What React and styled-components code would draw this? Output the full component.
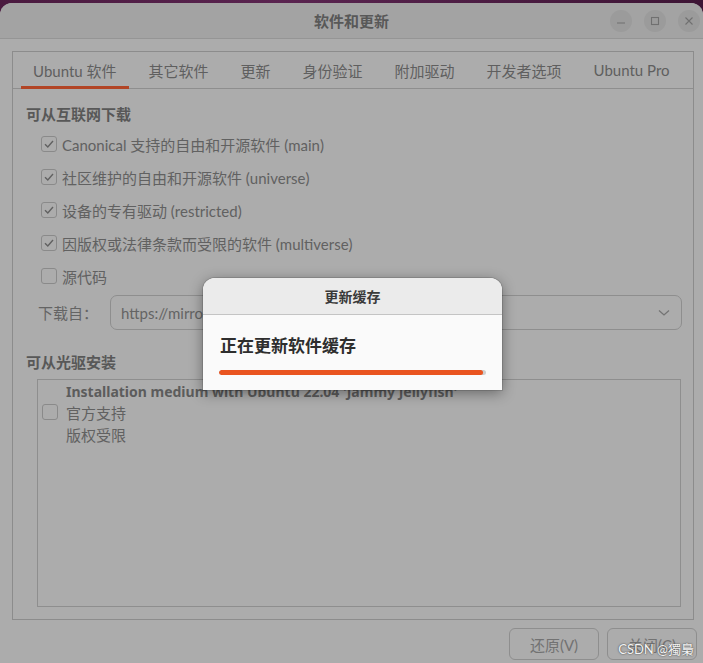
import styled, { createGlobalStyle } from "styled-components";

const GlobalStyle = createGlobalStyle`
  html, body {
    margin: 0;
    padding: 0;
    background: linear-gradient(90deg, #4a1a3f, #5a2450 40%, #3d1535);
    font-family: Lato, "Noto Sans CJK SC", sans-serif;
  }
`;

const TABS = ["Ubuntu 软件", "其它软件", "更新", "身份验证", "附加驱动", "开发者选项", "Ubuntu Pro"];

const SOURCES = [
  { label: "Canonical 支持的自由和开源软件 (main)", checked: true },
  { label: "社区维护的自由和开源软件 (universe)", checked: true },
  { label: "设备的专有驱动 (restricted)", checked: true },
  { label: "因版权或法律条款而受限的软件 (multiverse)", checked: true },
  { label: "源代码", checked: false },
];

function CheckBox({ checked }) {
  return (
    <Box>
      {checked && (
        <svg width="12" height="12" viewBox="0 0 12 12">
          <polyline points="2,6.2 4.8,9 10,3" fill="none" stroke="#616161" strokeWidth="1.4" />
        </svg>
      )}
    </Box>
  );
}

function App() {
  return (
    <>
      <GlobalStyle />
      <Window>
        <TitleBar>
          <span />
          <Title>软件和更新</Title>
          <WinButtons>
            <WinButton>
              <svg width="10" height="10" viewBox="0 0 10 10">
                <line x1="1" y1="7" x2="9" y2="7" stroke="#707070" strokeWidth="1.2" />
              </svg>
            </WinButton>
            <WinButton>
              <svg width="10" height="10" viewBox="0 0 10 10">
                <rect x="1.5" y="1.5" width="7" height="7" fill="none" stroke="#707070" strokeWidth="1.1" />
              </svg>
            </WinButton>
            <WinButton>
              <svg width="10" height="10" viewBox="0 0 10 10">
                <path d="M1.5 1.5 L8.5 8.5 M8.5 1.5 L1.5 8.5" stroke="#707070" strokeWidth="1.1" />
              </svg>
            </WinButton>
          </WinButtons>
        </TitleBar>

        <Notebook>
          <TabBar>
            {TABS.map((t, i) => (
              <Tab key={t} active={i === 0}>
                {t}
              </Tab>
            ))}
          </TabBar>
          <Page>
            <Heading>可从互联网下载</Heading>
            <CheckList>
              {SOURCES.map((s) => (
                <CheckRow key={s.label}>
                  <CheckBox checked={s.checked} />
                  <span>{s.label}</span>
                </CheckRow>
              ))}
            </CheckList>
            <DownloadRow>
              <span>下载自：</span>
              <Combo>
                <span>https://mirrors.tuna.tsinghua.edu.cn/ubuntu</span>
                <svg width="12" height="8" viewBox="0 0 12 8">
                  <polyline points="1,1.5 6,6 11,1.5" fill="none" stroke="#747474" strokeWidth="1.3" />
                </svg>
              </Combo>
            </DownloadRow>
            <Heading>可从光驱安装</Heading>
            <CdFrame>
              <CdTitle>Installation medium with Ubuntu 22.04 'Jammy Jellyfish'</CdTitle>
              <CdRow>
                <CheckBox checked={false} />
                <span>官方支持</span>
              </CdRow>
              <CdLine>版权受限</CdLine>
            </CdFrame>
          </Page>
        </Notebook>

        <ButtonRow>
          <ActionButton>还原(V)</ActionButton>
          <ActionButton>关闭(C)</ActionButton>
        </ButtonRow>

        <Dialog>
          <DialogHeader>更新缓存</DialogHeader>
          <DialogBody>
            <DialogText>正在更新软件缓存</DialogText>
            <Progress>
              <ProgressFill style={{ width: "99%" }} />
            </Progress>
          </DialogBody>
        </Dialog>

        <Watermark>CSDN @獨梟</Watermark>
      </Window>
    </>
  );
}

const Window = styled.div`
  position: relative;
  margin-top: 3px;
  height: 660px;
  background: #acacac;
  border-radius: 12px 12px 0 0;
  overflow: hidden;
  display: flex;
  flex-direction: column;
  color: #616161;
  font-size: 15px;
`;

const TitleBar = styled.div`
  height: 35px;
  flex-shrink: 0;
  background: #a3a3a3;
  border-bottom: 1px solid #959595;
  display: grid;
  grid-template-columns: 1fr auto 1fr;
  align-items: center;
`;

const Title = styled.div`
  font-weight: 700;
  font-size: 15px;
  color: #585858;
`;

const WinButtons = styled.div`
  justify-self: end;
  display: flex;
  gap: 12px;
  padding-right: 3px;
`;

const WinButton = styled.div`
  width: 22px;
  height: 22px;
  border-radius: 50%;
  background: #9b9b9b;
  display: flex;
  align-items: center;
  justify-content: center;
`;

const Notebook = styled.div`
  margin: 12px 9px 0 12px;
  height: 567px;
  border: 1px solid #8c8c8c;
  display: flex;
  flex-direction: column;
`;

const TabBar = styled.div`
  height: 36px;
  border-bottom: 1px solid #8e8e8e;
  display: flex;
  gap: 8px;
  padding-left: 8px;
`;

const Tab = styled.div`
  padding: 2px 12px 0;
  display: flex;
  align-items: center;
  color: #5f5f5f;
  border-bottom: 3px solid ${(p) => (p.active ? "#b24526" : "transparent")};
  margin-bottom: -1px;
`;

const Page = styled.div`
  flex: 1;
  padding: 15px 12px 12px 13px;
  display: flex;
  flex-direction: column;
`;

const Heading = styled.div`
  font-weight: 700;
  color: #585858;
  font-size: 15px;
  line-height: 20px;
`;

const CheckList = styled.div`
  display: flex;
  flex-direction: column;
  gap: 13px;
  padding: 10px 0 0 15px;
`;

const CheckRow = styled.div`
  display: flex;
  align-items: center;
  gap: 5px;
  height: 20px;
`;

const Box = styled.div`
  width: 14px;
  height: 14px;
  border: 1px solid #8a8a8a;
  border-radius: 3px;
  display: flex;
  align-items: center;
  justify-content: center;
  flex-shrink: 0;
`;

const DownloadRow = styled.div`
  display: flex;
  align-items: center;
  gap: 12px;
  padding-left: 12px;
  margin-top: 9px;
  margin-bottom: 22px;
  color: #646464;
`;

const Combo = styled.div`
  flex: 1;
  height: 33px;
  border: 1px solid #8e8e8e;
  border-radius: 7px;
  display: flex;
  align-items: center;
  justify-content: space-between;
  padding: 0 11px 0 10px;
  overflow: hidden;
  white-space: nowrap;
  margin-right: -1px;
`;

const CdFrame = styled.div`
  margin: 7px 0 0 11px;
  height: 224px;
  border: 1px solid #8e8e8e;
  padding: 2px 0 0 4px;
  display: flex;
  flex-direction: column;
`;

const CdTitle = styled.div`
  font-family: "Noto Sans", "Noto Sans CJK SC", sans-serif;
  font-weight: 700;
  font-size: 14px;
  color: #5c5c5c;
  padding-left: 24px;
  line-height: 20px;
  white-space: nowrap;
`;

const CdRow = styled.div`
  display: flex;
  align-items: center;
  gap: 8px;
  height: 22px;
  margin-top: -1px;
`;

const CdLine = styled.div`
  padding-left: 24px;
  line-height: 24px;
`;

const ButtonRow = styled.div`
  display: flex;
  justify-content: flex-end;
  gap: 8px;
  margin-top: 8px;
  padding-right: 6px;
`;

const ActionButton = styled.div`
  width: 88px;
  height: 30px;
  border: 1px solid #8e8e8e;
  border-radius: 6px;
  display: flex;
  align-items: center;
  justify-content: center;
  color: #727272;
`;

const Dialog = styled.div`
  position: absolute;
  left: 203px;
  top: 275px;
  width: 299px;
  height: 112px;
  border-radius: 12px 12px 0 0;
  overflow: hidden;
  background: #fafafa;
  box-shadow: 0 3px 14px rgba(0, 0, 0, 0.4), 0 0 0 1px rgba(0, 0, 0, 0.12);
  display: flex;
  flex-direction: column;
`;

const DialogHeader = styled.div`
  height: 36px;
  background: #ebebeb;
  border-bottom: 1px solid #c4c4c4;
  display: flex;
  align-items: center;
  justify-content: center;
  font-weight: 700;
  font-size: 14px;
  color: #3a3a3a;
`;

const DialogBody = styled.div`
  padding: 20px 16px 0 16px;
`;

const DialogText = styled.div`
  font-weight: 700;
  font-size: 17px;
  color: #2e2e2e;
  line-height: 22px;
  margin-left: 1px;
`;

const Progress = styled.div`
  margin-top: 13px;
  height: 5px;
  border-radius: 3px;
  background: #cfcfcf;
  overflow: hidden;
  width: 267px;
`;

const ProgressFill = styled.div`
  height: 100%;
  background: #e95420;
  border-radius: 3px;
`;

const Watermark = styled.div`
  position: absolute;
  right: 9px;
  bottom: 5px;
  font-size: 13px;
  color: #f4f4f4;
  text-shadow: 0 0 2px #555, 0 0 1px #555;
`;

export default App;
